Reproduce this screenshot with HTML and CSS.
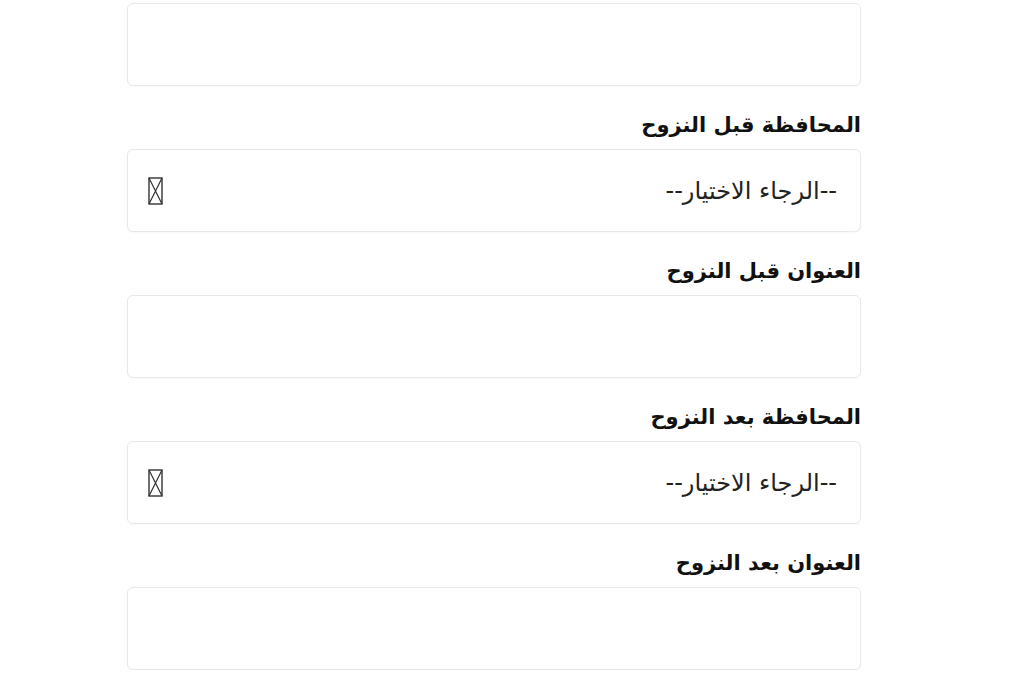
FILE: index.html
```html
<!DOCTYPE html>
<html lang="ar" dir="rtl">
<head>
    <meta charset="UTF-8">
    <meta name="viewport" content="width=device-width, initial-scale=1.0">
    <title>بيانات السكن</title>
    <link rel="stylesheet" href="styles.css">
</head>
<body>
    <form class="form">
        <!-- Previous field (label scrolled out of view) -->
        <div class="field">
            <input type="text" class="input" aria-label="حقل">
        </div>

        <div class="field">
            <label class="label">المحافظة قبل النزوح</label>
            <div class="select">
                <span class="select-text">--الرجاء الاختيار--</span>
                <svg class="select-icon" width="15" height="28" viewBox="0 0 15 28">
                    <rect x="1" y="1" width="13" height="26" fill="none" stroke="#333" stroke-width="1.4"/>
                    <path d="M1 1 L14 27 M14 1 L1 27" stroke="#333" stroke-width="1.2"/>
                </svg>
            </div>
        </div>

        <div class="field">
            <label class="label">العنوان قبل النزوح</label>
            <input type="text" class="input" aria-label="العنوان قبل النزوح">
        </div>

        <div class="field">
            <label class="label">المحافظة بعد النزوح</label>
            <div class="select">
                <span class="select-text">--الرجاء الاختيار--</span>
                <svg class="select-icon" width="15" height="28" viewBox="0 0 15 28">
                    <rect x="1" y="1" width="13" height="26" fill="none" stroke="#333" stroke-width="1.4"/>
                    <path d="M1 1 L14 27 M14 1 L1 27" stroke="#333" stroke-width="1.2"/>
                </svg>
            </div>
        </div>

        <div class="field">
            <label class="label">العنوان بعد النزوح</label>
            <input type="text" class="input" aria-label="العنوان بعد النزوح">
        </div>
    </form>
</body>
</html>
```

FILE: styles.css
```css
/* Base */
body {
    margin: 0;
    background: #fff;
    font-family: 'DejaVu Sans', sans-serif;
    color: #111;
}

.form {
    width: 734px;
    margin: 0 auto 0 127px;
    padding-top: 3px;
    display: flex;
    flex-direction: column;
    gap: 26px;
}

.field {
    display: flex;
    flex-direction: column;
}

.label {
    font-size: 21px;
    font-weight: bold;
    line-height: 26px;
    margin-bottom: 11px;
}

.input,
.select {
    box-sizing: border-box;
    height: 83px;
    width: 100%;
    border: 1px solid #e8e8e8;
    border-radius: 6px;
    background: #fff;
    box-shadow: 0 1px 2px rgba(0, 0, 0, 0.03);
}

.input {
    margin: 0;
    padding: 0 20px;
    font: inherit;
}

.select {
    display: flex;
    align-items: center;
    justify-content: space-between;
    padding: 0 23px 0 20px;
}

.select-text {
    font-size: 24px;
    color: #222;
}

.select-icon {
    display: block;
}
```
